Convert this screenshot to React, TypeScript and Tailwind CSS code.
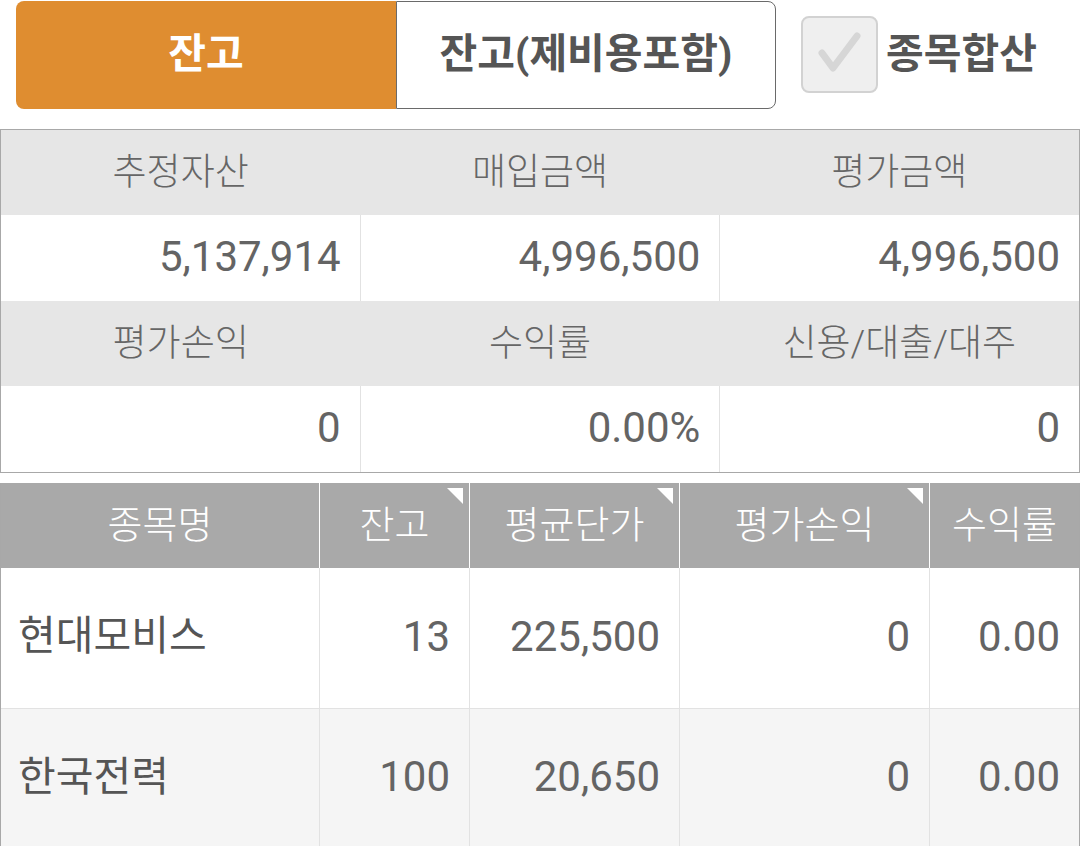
const font = "font-['Roboto','Noto_Sans_CJK_KR',sans-serif]"

const summary = [
  [
    { label: "추정자산", value: "5,137,914" },
    { label: "매입금액", value: "4,996,500" },
    { label: "평가금액", value: "4,996,500" },
  ],
  [
    { label: "평가손익", value: "0" },
    { label: "수익률", value: "0.00%" },
    { label: "신용/대출/대주", value: "0" },
  ],
]

const columns = [
  { title: "종목명", width: "w-[318px]", sort: false },
  { title: "잔고", width: "w-[150px]", sort: true },
  { title: "평균단가", width: "w-[210px]", sort: true },
  { title: "평가손익", width: "w-[250px]", sort: true },
  { title: "수익률", width: "flex-1", sort: false },
]

const holdings = [
  { name: "현대모비스", qty: "13", avg: "225,500", pl: "0", rate: "0.00" },
  { name: "한국전력", qty: "100", avg: "20,650", pl: "0", rate: "0.00" },
]

function Corner() {
  return (
    <span className="absolute top-[5px] right-[6px] w-0 h-0 border-t-[16px] border-t-white border-l-[16px] border-l-transparent" />
  )
}

const num = "flex items-center justify-end pr-[19px] pb-[4px] border-l border-[#e2e2e2] text-[42px] text-[#646464]"

export default function App() {
  return (
    <div className={`w-[1080px] h-[846px] overflow-hidden bg-white ${font}`}>
      {/* top toggle */}
      <div className="h-[129px] flex items-start pl-4 pt-[1px]">
        <div className="flex h-[108px] w-[760px]">
          <button className="w-[380px] h-full bg-[#df8d30] rounded-l-[8px] text-white text-[41px] font-bold">
            잔고
          </button>
          <button className="flex-1 h-full bg-white border border-[#6a6a6a] rounded-r-[8px] text-[#555] text-[41px] font-bold">
            잔고(제비용포함)
          </button>
        </div>
        <div className="flex items-center ml-[25px] mt-[15px]">
          <div className="w-[77px] h-[77px] rounded-[8px] border-2 border-[#d2d2d2] bg-[#efefef]">
            <svg width="73" height="73" viewBox="0 0 73 73">
              <path d="M19 35 L30 50 L54 18" fill="none" stroke="#d6d6d6" strokeWidth="7" strokeLinecap="round" strokeLinejoin="round" />
            </svg>
          </div>
          <span className="ml-[8px] text-[41px] font-bold text-[#555]">종목합산</span>
        </div>
      </div>

      {/* summary */}
      <div className="border border-[#a8a8a8]">
        {summary.map((row, i) => (
          <div key={i}>
            <div className="flex h-[85px] bg-[#e6e6e6]">
              {row.map((c) => (
                <div key={c.label} className="flex-1 flex items-center justify-center text-[37px] font-light text-[#666]">
                  {c.label}
                </div>
              ))}
            </div>
            <div className="flex h-[86px] bg-white">
              {row.map((c, j) => (
                <div
                  key={c.label}
                  className={`flex-1 flex items-center justify-end pr-[19px] pb-[4px] text-[42px] text-[#646464] ${j > 0 ? "border-l border-[#e2e2e2]" : ""}`}
                >
                  {c.value}
                </div>
              ))}
            </div>
          </div>
        ))}
      </div>

      {/* holdings */}
      <div className="mt-[10px] border-x border-[#a8a8a8]">
        <div className="flex h-[85px] bg-[#a9a9a9]">
          {columns.map((c, i) => (
            <div
              key={c.title}
              className={`relative ${c.width} flex items-center justify-center text-[38px] font-light text-white ${i > 0 ? "border-l border-white" : ""}`}
            >
              {c.title}
              {c.sort && <Corner />}
            </div>
          ))}
        </div>
        {holdings.map((h, i) => (
          <div key={h.name} className={`flex h-[140px] ${i > 0 ? "border-t border-[#e2e2e2]" : ""} ${i % 2 ? "bg-[#f5f5f5]" : "bg-white"}`}>
            <div className="w-[318px] flex items-center pl-[17px] pb-[2px] text-[41px] text-[#555]">{h.name}</div>
            <div className={`w-[150px] ${num}`}>{h.qty}</div>
            <div className={`w-[210px] ${num}`}>{h.avg}</div>
            <div className={`w-[250px] ${num}`}>{h.pl}</div>
            <div className={`flex-1 ${num}`}>{h.rate}</div>
          </div>
        ))}
      </div>
    </div>
  )
}
